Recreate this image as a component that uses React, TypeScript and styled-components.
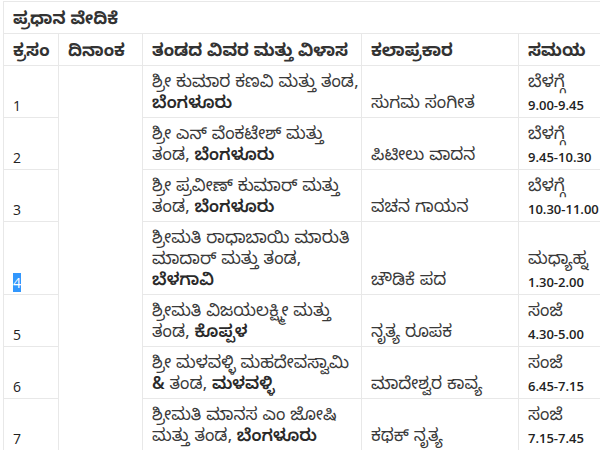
import type { ReactNode } from "react";
import styled, { createGlobalStyle } from "styled-components";

// ─── Global ──────────────────────────────────────────────────────────────────

const GlobalStyle = createGlobalStyle`
  html, body {
    margin: 0;
    padding: 0;
    background: #ffffff;
    overflow: hidden;
  }
  body {
    font-family: "Noto Sans Kannada", "Noto Sans", "Open Sans", sans-serif;
    color: #333333;
  }
`;

// ─── Styled Components ───────────────────────────────────────────────────────

const StyledPage = styled.div`
  padding: 1px 0 0 3px;
  width: 640px;
`;

const StyledTable = styled.table`
  border-collapse: collapse;
  table-layout: fixed;
  width: 637px;
  font-size: 17px;
`;

const StyledCol = styled.col<{ $width: number }>`
  width: ${(p) => p.$width}px;
`;

const StyledCaptionCell = styled.th`
  border: 1px solid #e8e8e8;
  border-right: none;
  padding: 9px 9px 1px;
  text-align: left;
  font-weight: 700;
`;

const StyledHeadCell = styled.th`
  border: 1px solid #e8e8e8;
  padding: 9px 9px 1px;
  text-align: left;
  font-weight: 700;
  white-space: nowrap;
  overflow: hidden;
`;

const StyledCell = styled.td`
  border: 1px solid #e8e8e8;
  padding: 8px 9px 1px;
  vertical-align: bottom;
  white-space: nowrap;
  color: #3a3a3a;
`;

// one text line of a cell; the fixed height keeps mixed fonts from
// stretching the row
const StyledLine = styled.div`
  height: 21px;
  line-height: 21px;
  white-space: nowrap;
`;

const StyledNumber = styled.span<{ $selected?: boolean }>`
  font-family: "Open Sans", "Liberation Sans", sans-serif;
  font-size: 14px;
  color: ${(p) => (p.$selected ? "#ffffff" : "#222222")};
  background: ${(p) => (p.$selected ? "#3297fd" : "transparent")};
`;

const StyledPlace = styled.strong`
  font-weight: 600;
  color: #2a2a2a;
`;

const StyledTime = styled.span`
  font-family: "Open Sans", "Liberation Sans", sans-serif;
  font-size: 13px;
  font-weight: 600;
  color: #222222;
`;

// ─── Data ────────────────────────────────────────────────────────────────────

type Slot = {
  id: number;
  team: ReactNode[];
  art: string;
  period: string;
  time: string;
};

const COLUMNS = [
  { label: "ಕ್ರಸಂ", width: 55 },
  { label: "ದಿನಾಂಕ", width: 84 },
  { label: "ತಂಡದ ವಿವರ ಮತ್ತು ವಿಳಾಸ", width: 219 },
  { label: "ಕಲಾಪ್ರಕಾರ", width: 157 },
  { label: "ಸಮಯ", width: 122 },
];

const SLOTS: Slot[] = [
  {
    id: 1,
    team: ["ಶ್ರೀ ಕುಮಾರ ಕಣವಿ ಮತ್ತು ತಂಡ,", <StyledPlace>ಬೆಂಗಳೂರು</StyledPlace>],
    art: "ಸುಗಮ ಸಂಗೀತ",
    period: "ಬೆಳಗ್ಗೆ",
    time: "9.00-9.45",
  },
  {
    id: 2,
    team: [
      "ಶ್ರೀ ಎನ್ ವೆಂಕಟೇಶ್ ಮತ್ತು",
      <>
        ತಂಡ, <StyledPlace>ಬೆಂಗಳೂರು</StyledPlace>
      </>,
    ],
    art: "ಪಿಟೀಲು ವಾದನ",
    period: "ಬೆಳಗ್ಗೆ",
    time: "9.45-10.30",
  },
  {
    id: 3,
    team: [
      "ಶ್ರೀ ಪ್ರವೀಣ್ ಕುಮಾರ್ ಮತ್ತು",
      <>
        ತಂಡ, <StyledPlace>ಬೆಂಗಳೂರು</StyledPlace>
      </>,
    ],
    art: "ವಚನ ಗಾಯನ",
    period: "ಬೆಳಗ್ಗೆ",
    time: "10.30-11.00",
  },
  {
    id: 4,
    team: [
      "ಶ್ರೀಮತಿ ರಾಧಾಬಾಯಿ ಮಾರುತಿ",
      "ಮಾದಾರ್ ಮತ್ತು ತಂಡ,",
      <StyledPlace>ಬೆಳಗಾವಿ</StyledPlace>,
    ],
    art: "ಚೌಡಿಕೆ ಪದ",
    period: "ಮಧ್ಯಾಹ್ನ",
    time: "1.30-2.00",
  },
  {
    id: 5,
    team: [
      "ಶ್ರೀಮತಿ ವಿಜಯಲಕ್ಷ್ಮೀ ಮತ್ತು",
      <>
        ತಂಡ, <StyledPlace>ಕೊಪ್ಪಳ</StyledPlace>
      </>,
    ],
    art: "ನೃತ್ಯ ರೂಪಕ",
    period: "ಸಂಜೆ",
    time: "4.30-5.00",
  },
  {
    id: 6,
    team: [
      "ಶ್ರೀ ಮಳವಳ್ಳಿ ಮಹದೇವಸ್ವಾಮಿ",
      <>
        <StyledPlace>&amp;</StyledPlace> ತಂಡ,{" "}
        <StyledPlace>ಮಳವಳ್ಳಿ</StyledPlace>
      </>,
    ],
    art: "ಮಾದೇಶ್ವರ ಕಾವ್ಯ",
    period: "ಸಂಜೆ",
    time: "6.45-7.15",
  },
  {
    id: 7,
    team: [
      "ಶ್ರೀಮತಿ ಮಾನಸ ಎಂ ಜೋಷಿ",
      <>
        ಮತ್ತು ತಂಡ, <StyledPlace>ಬೆಂಗಳೂರು</StyledPlace>
      </>,
    ],
    art: "ಕಥಕ್ ನೃತ್ಯ",
    period: "ಸಂಜೆ",
    time: "7.15-7.45",
  },
];

// the row number the user has highlighted in the screenshot
const SELECTED_ID = 4;

// ─── Component ───────────────────────────────────────────────────────────────

const App = () => {
  return (
    <StyledPage>
      <GlobalStyle />
      <StyledTable>
        <colgroup>
          {COLUMNS.map((col) => (
            <StyledCol key={col.label} $width={col.width} />
          ))}
        </colgroup>
        <thead>
          <tr>
            <StyledCaptionCell colSpan={COLUMNS.length}>
              <StyledLine>ಪ್ರಧಾನ ವೇದಿಕೆ</StyledLine>
            </StyledCaptionCell>
          </tr>
          <tr>
            {COLUMNS.map((col) => (
              <StyledHeadCell key={col.label}>
                <StyledLine>{col.label}</StyledLine>
              </StyledHeadCell>
            ))}
          </tr>
        </thead>
        <tbody>
          {SLOTS.map((slot, i) => (
            <tr key={slot.id}>
              <StyledCell>
                <StyledLine>
                  <StyledNumber $selected={slot.id === SELECTED_ID}>
                    {slot.id}
                  </StyledNumber>
                </StyledLine>
              </StyledCell>
              {i === 0 && <StyledCell rowSpan={SLOTS.length} />}
              <StyledCell>
                {slot.team.map((line, n) => (
                  <StyledLine key={n}>{line}</StyledLine>
                ))}
              </StyledCell>
              <StyledCell>
                <StyledLine>{slot.art}</StyledLine>
              </StyledCell>
              <StyledCell>
                <StyledLine>{slot.period}</StyledLine>
                <StyledLine>
                  <StyledTime>{slot.time}</StyledTime>
                </StyledLine>
              </StyledCell>
            </tr>
          ))}
        </tbody>
      </StyledTable>
    </StyledPage>
  );
};

App.displayName = "App";
export default App;
